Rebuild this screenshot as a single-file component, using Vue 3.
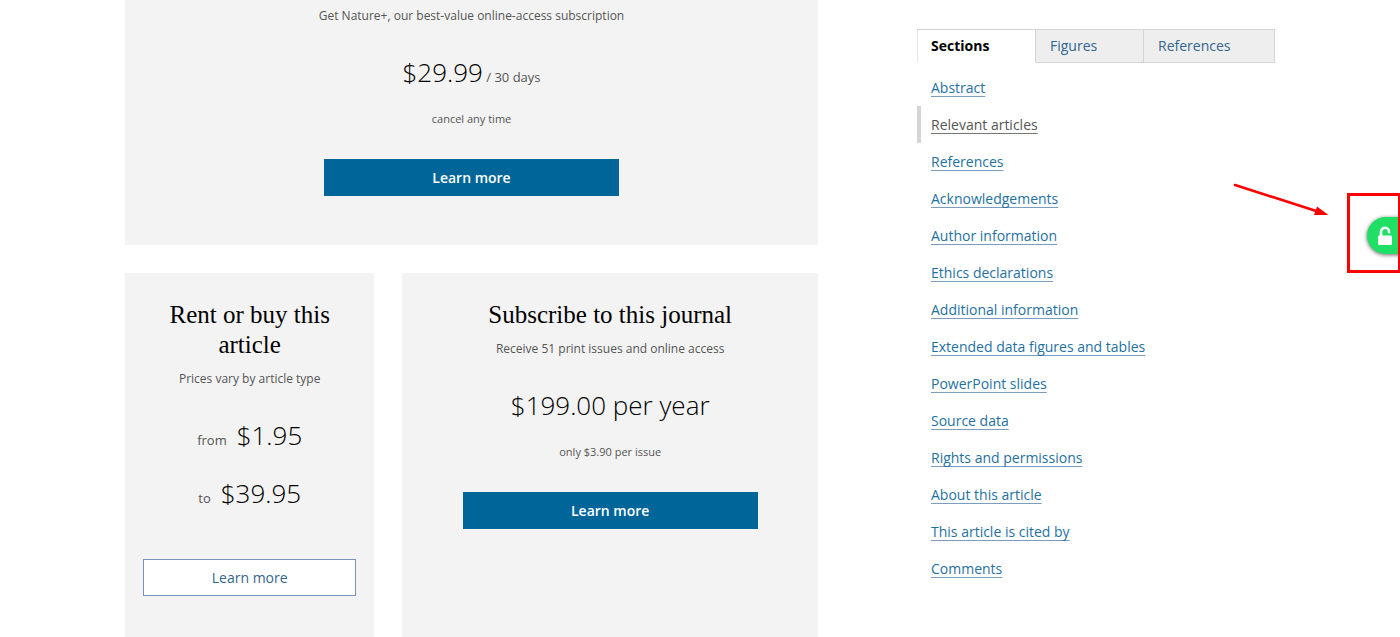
<script setup>
import { ref } from 'vue'

const tabs = ['Sections', 'Figures', 'References']
const activeTab = ref('Sections')
const current = ref('Relevant articles')
const sections = [
  'Abstract',
  'Relevant articles',
  'References',
  'Acknowledgements',
  'Author information',
  'Ethics declarations',
  'Additional information',
  'Extended data figures and tables',
  'PowerPoint slides',
  'Source data',
  'Rights and permissions',
  'About this article',
  'This article is cited by',
  'Comments',
]
</script>

<template>
  <div class="page">
    <main class="offers">
      <section class="card card-wide">
        <p class="sub">Get Nature+, our best-value online-access subscription</p>
        <p class="price">$29.99<span class="unit"> / 30 days</span></p>
        <p class="note">cancel any time</p>
        <a class="btn solid" href="#plus">Learn more</a>
      </section>
      <div class="row">
        <section class="card">
          <h3>Rent or buy this article</h3>
          <p class="sub">Prices vary by article type</p>
          <p class="price"><span class="unit before">from</span>$1.95</p>
          <p class="price second"><span class="unit before">to</span>$39.95</p>
          <a class="btn outline" href="#rent">Learn more</a>
        </section>
        <section class="card">
          <h3>Subscribe to this journal</h3>
          <p class="sub">Receive 51 print issues and online access</p>
          <p class="price">$199.00 per year</p>
          <p class="note">only $3.90 per issue</p>
          <a class="btn solid" href="#subscribe">Learn more</a>
        </section>
      </div>
    </main>

    <aside class="side">
      <div class="tabs" role="tablist">
        <button
          v-for="tab in tabs"
          :key="tab"
          class="tab"
          :class="{ active: tab === activeTab }"
          role="tab"
          type="button"
          :aria-selected="tab === activeTab"
          @click="activeTab = tab"
        >{{ tab }}</button>
      </div>
      <ul class="links">
        <li v-for="item in sections" :key="item" :class="{ current: item === current }">
          <a href="#section" @click="current = item">{{ item }}</a>
        </li>
      </ul>
    </aside>

    <svg class="arrow" viewBox="0 0 100 40" aria-hidden="true">
      <path d="M5 5 L87 31.3" stroke="#ff0000" stroke-width="2.6" stroke-linecap="round" />
      <path d="M98.500 35 L84 35 L87 26.500 Z" fill="#ff0000" />
    </svg>
    <div class="frame">
      <button class="unlock" type="button" aria-label="Open access">
        <svg viewBox="0 0 16 20" aria-hidden="true">
          <path d="M4 10 V5.800 A4 4 0 0 1 12 5.800 V6.200" fill="none" stroke="#fff" stroke-width="2.600" stroke-linecap="round" />
          <rect x="1" y="9.500" width="14" height="9.500" rx="1.200" fill="#fff" />
        </svg>
      </button>
    </div>
  </div>
</template>

<style>
body {
  margin: 0;
  background: #fff;
}
</style>

<style scoped>
.page {
  position: relative;
  display: flex;
  justify-content: center;
  gap: 99px;
  padding: 0 125px;
  overflow: hidden;
  font-family: "Open Sans", "Noto Sans", sans-serif;
  font-size: 14px;
  color: #555;
}
.offers {
  flex: 1;
  max-width: 693px;
}
.row {
  display: grid;
  grid-template-columns: 3fr 5fr;
  gap: 28px;
  margin-top: 28px;
}
.card {
  display: flex;
  flex-direction: column;
  align-items: center;
  padding: 27px 18px 41px;
  background: #f3f3f3;
  text-align: center;
}
.card-wide {
  padding: 6px 18px 49px;
}
h3 {
  margin: 0 0 9px;
  font: 400 25px/30px "Liberation Serif", serif;
  color: #000;
}
p {
  margin: 0;
}
.sub {
  font-size: 12px;
  line-height: 20px;
}
.price {
  margin-top: 26px;
  font-size: 26px;
  font-weight: 300;
  line-height: 40px;
  color: #000;
}
.price.second {
  margin-top: 18px;
}
.unit {
  font-size: 13px;
  font-weight: 400;
  line-height: 20px;
  color: #555;
}
.before {
  margin-right: 10px;
}
.note {
  margin-top: 17px;
  font-size: 11px;
  line-height: 20px;
}
.btn {
  box-sizing: border-box;
  margin-top: 30px;
  border: 1px solid #069;
  font-size: 14px;
  line-height: 35px;
  text-decoration: none;
}
.solid {
  width: 100%;
  max-width: 295px;
  background: #069;
  color: #fff;
  font-weight: 600;
}
.outline {
  width: 100%;
  margin-top: 46px;
  border-color: #7893b9;
  background: #fff;
  color: #33658f;
}
.side {
  flex: 0 0 358px;
  padding-top: 29px;
}
.tabs {
  display: grid;
  grid-template-columns: 119fr 108fr 131fr;
}
.tab {
  padding: 0 14px;
  border: solid #d5d5d5;
  border-width: 1px 1px 1px 0;
  background: #eee;
  color: #33658f;
  font: inherit;
  line-height: 32px;
  text-align: left;
}
.tab.active {
  padding-left: 13px;
  border-color: #d5d5d5 #d5d5d5 #fff #e5e5e5;
  border-left-width: 1px;
  background: #fff;
  color: #000;
  font-weight: 700;
}
.links {
  margin: 6px 0 0;
  padding: 0;
  list-style: none;
}
.links li {
  padding-left: 10px;
  border-left: 4px solid transparent;
  line-height: 37px;
}
.links li.current {
  border-left-color: #d5d5d5;
}
.links a {
  color: #1f719f;
  text-decoration: underline;
  text-decoration-color: #7c9cbe;
  text-decoration-thickness: 1px;
  text-underline-offset: 3px;
  text-decoration-skip-ink: none;
}
.links .current a {
  color: #555;
  text-decoration-color: #777;
}
.arrow {
  position: absolute;
  top: 180px;
  right: 70px;
  width: 100px;
  height: 40px;
}
.frame {
  position: absolute;
  top: 193px;
  right: 0;
  box-sizing: border-box;
  width: 53px;
  height: 80px;
  padding: 21px 0 0 17px;
  overflow: hidden;
  border: 3px solid #ff0000;
  border-right-width: 2px;
}
.unlock {
  display: flex;
  align-items: center;
  width: 50px;
  height: 37px;
  padding: 0 0 0 10px;
  border: 0;
  border-radius: 19px;
  background: #1fe065;
  box-shadow: 0 1px 4px rgba(0, 0, 0, 0.6);
}
.unlock svg {
  width: 16px;
  height: 20px;
}
</style>
